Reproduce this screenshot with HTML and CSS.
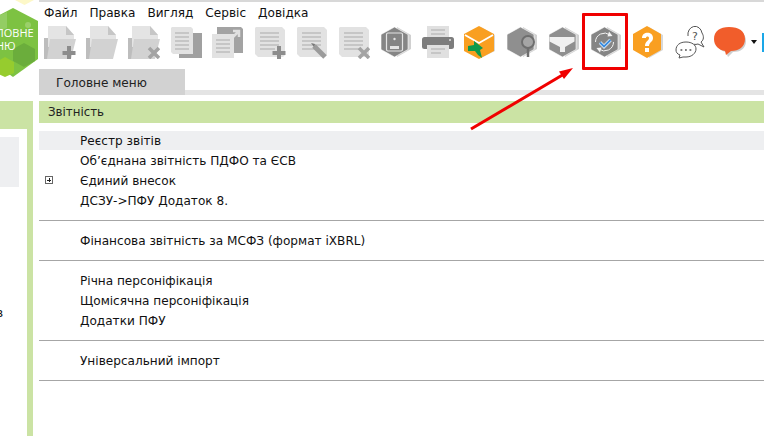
FILE: index.html
```html
<!DOCTYPE html>
<html lang="uk">
<head>
<meta charset="utf-8">
<title>Головне меню</title>
<link rel="stylesheet" href="styles.css">
</head>
<body>
<svg class="defs" width="0" height="0">
  <defs>
    <g id="folder">
      <path d="M0 13h6v21H0z" fill="#bdbdbd"/>
      <path d="M4 1h18l8 9v12H4z" fill="#e4e4e4"/>
      <path d="M22 1l8 9h-8z" fill="#c6c6c6"/>
      <path d="M3 34l3-20h26l-5 20z" fill="#d2d2d2"/>
    </g>
    <g id="sheet">
      <path d="M2 2h26l3 3v25l-2 2H4l-3-3V3z" fill="#e2e2e2"/>
      <path d="M6 8h19M6 12h19M6 16h19M6 20h19M6 24h15" stroke="#bdbdbd" stroke-width="1.600"/>
    </g>
    <g id="plus"><path d="M25 21v13M18.500 28h13" stroke="#8c8c8c" stroke-width="4"/></g>
    <g id="cross"><path d="M21 23l10 10M31 23l-10 10" stroke="#a3a3a3" stroke-width="3.600"/></g>
    <g id="hexback"><path d="M17 2l14 8v14l-14 8z" fill="#d0d0d0"/></g>
    <path id="hex" d="M14.500 2L28 9.500v15L14.500 32 1 24.500v-15z" stroke="#fff" stroke-width=".6"/>
  </defs>
</svg>

<aside class="side">
  <div class="side-head"></div>
  <div class="side-body">
    <div class="side-panel">
      <div class="side-sel"></div>
      <div class="side-text">в</div>
    </div>
    <div class="side-strip"></div>
  </div>
</aside>

<div class="logo">
  <svg class="logo-hex" width="39" height="72" viewBox="0 0 39 72">
    <path d="M13 1l25 13v38L13 70-12 52V14z" fill="#7dc242"/>
    <path d="M24 36l11 6v12l-11 6-11-6V42z" fill="#6bad3c"/>
    <path d="M5 50l9 5v11l-9 4-9-4V55z" fill="#96cc2e"/>
    <path d="M0 8l7-3v16l-7 3z" fill="#93cd63"/>
    <circle cx="28" cy="18" r="3" fill="#9bd06a"/>
  </svg>
  <span class="logo-text">ЛОВНЕ<br>НЮ</span>
</div>
<div class="logo-top"></div>

<main class="main">
  <nav class="menu">
    <span>Файл</span><span>Правка</span><span>Вигляд</span><span>Сервіс</span><span>Довідка</span>
  </nav>

  <div class="toolbar">
    <svg class="ico" viewBox="0 0 32 34"><use href="#folder"/><use href="#plus"/></svg>
    <svg class="ico" viewBox="0 0 32 34"><use href="#folder"/></svg>
    <svg class="ico" viewBox="0 0 32 34"><use href="#folder"/><use href="#cross"/></svg>
    <svg class="ico" viewBox="0 0 32 34">
      <rect x="9" y="8" width="23" height="25" fill="#a0a0a0"/>
      <path d="M2 2h19l2 2v25H3l-2-2V3z" fill="#e2e2e2"/>
      <path d="M5 8h14M5 12h14M5 16h14M5 20h14M5 24h14" stroke="#bdbdbd" stroke-width="1.600"/>
    </svg>
    <svg class="ico" viewBox="0 0 32 34">
      <path d="M5 2h24l2 2v24H5z" fill="#a3a3a3"/>
      <path d="M19 14l7-7M21 6h6v6" stroke="#e0e0e0" stroke-width="2.500" fill="none"/>
      <path d="M0 9h22v24H0z" fill="#e2e2e2"/>
      <path d="M4 15h14M4 19h14M4 23h14M4 27h14" stroke="#bdbdbd" stroke-width="1.600"/>
    </svg>
    <svg class="ico" viewBox="0 0 32 34"><use href="#sheet"/><use href="#plus"/></svg>
    <svg class="ico" viewBox="0 0 32 34">
      <use href="#sheet"/>
      <path d="M18 21l11 11" stroke="#9b9b9b" stroke-width="5"/>
      <path d="M15 18l4 1-1 3z" fill="#777"/>
    </svg>
    <svg class="ico" viewBox="0 0 32 34"><use href="#sheet"/><use href="#cross"/></svg>
    <svg class="ico" viewBox="0 0 32 34">
      <use href="#hexback"/>
      <use href="#hex" fill="#858585"/>
      <rect x="6.500" y="8" width="16" height="18" rx="1.500" fill="#858585" stroke="#e4e4e4" stroke-width="1.200"/>
      <circle cx="14.500" cy="14" r="1.200" fill="#e4e4e4"/>
      <path d="M10 24v-3h9v3z" fill="#e4e4e4"/>
    </svg>
    <svg class="ico" viewBox="0 0 32 34">
      <rect x="5" y="1" width="22" height="14" fill="#e0e0e0"/>
      <path d="M9 5h14M9 9h14" stroke="#bdbdbd" stroke-width="1.500"/>
      <rect x="0" y="12" width="32" height="12" rx="2.500" fill="#7d7d7d"/>
      <rect x="5" y="20" width="22" height="13" fill="#e0e0e0"/>
      <path d="M9 24h14M9 28h10" stroke="#bdbdbd" stroke-width="1.500"/>
      <circle cx="28" cy="15" r="1" fill="#e0e0e0"/>
    </svg>
    <svg class="ico" viewBox="0 0 32 34">
      <path d="M17 2l14 8v16l-14 7z" fill="#d8d8d8"/>
      <path d="M15 1l15 8v17l-15 8L0 26V9z" fill="#f99f21"/>
      <path d="M1 10l14 8 14-8" stroke="#fff" stroke-width="1.800" fill="none"/>
      <path d="M4 21l6-1 0-4 9 7-3 2 2 8-4-3-3-4-7 0z" fill="#0f9a4c"/>
    </svg>
    <svg class="ico" viewBox="0 0 32 34">
      <use href="#hexback"/>
      <use href="#hex" fill="#8f8f8f"/>
      <circle cx="22" cy="17" r="6" fill="#a5a5a5" stroke="#6e6e6e" stroke-width="2"/>
      <path d="M22 23v9" stroke="#6e6e6e" stroke-width="2.500"/>
    </svg>
    <svg class="ico" viewBox="0 0 32 34">
      <use href="#hexback"/>
      <use href="#hex" fill="#8f8f8f"/>
      <path d="M1.500 12h25v4.500l-9.500 5.500v5h-5v-5l-10.500-5.500z" fill="#f0f0f0"/>
    </svg>
    <svg class="ico" viewBox="0 0 32 34">
      <use href="#hexback"/>
      <use href="#hex" fill="#858585"/>
      <path d="M5.500 17a9 9 0 0 1 14.500-7M23.500 17a9 9 0 0 1-14.500 7" stroke="#f4f4f4" stroke-width="1" fill="none"/>
      <path d="M19 6.500l3.500 4.500-5 .5zM10 27.500L6.500 23l5-.5z" fill="#f4f4f4"/>
      <path d="M10 17.500l4 4 6.500-6.500" stroke="#e8f0f8" stroke-width="3.400" fill="none"/>
      <path d="M10 17.500l4 4 6.500-6.500" stroke="#3a8de0" stroke-width="1.800" fill="none"/>
    </svg>
    <svg class="ico" viewBox="0 0 32 34">
      <path d="M17 2l14 8v15l-14 8z" fill="#d8d8d8"/>
      <path d="M15 1l14 8v16l-14 8-14-8V9z" fill="#f99f21"/>
      <path d="M10 13c0-7 11-7 11 0 0 4-4 4-4 8h-4c0-5 4-5 4-8 0-2-3-2-3 0z" fill="#fff"/>
      <rect x="13" y="23" width="4" height="4" fill="#fff"/>
    </svg>
    <svg class="ico ico-chat" viewBox="0 0 32 34">
      <path d="M14 11a7 8 0 0 1 14-3c2 3 2 7-1 9l3 5-6-3c-1 .5-3 .5-4 .3" fill="#fff" stroke="#555" stroke-width="1"/>
      <path d="M2 25c0-5 4-8 10-8s10 3 10 7-4 8-10 8l-3 0-4 1 1-3c-3-1-4-3-4-5z" fill="#fff" stroke="#555" stroke-width="1"/>
      <text class="chat-q" x="21" y="15">?</text>
      <path d="M6.500 25h1.800M11 25h1.800M15.500 25h1.800" stroke="#555" stroke-width="1.600"/>
    </svg>
    <div class="balloon">
      <svg class="ico" viewBox="0 0 32 34">
        <path d="M17 5c9 0 15 3 15 11s-6 11-13 11l-5 5-2-5C6 26 3 22 3 16S8 5 17 5z" fill="#cfcfcf"/>
        <path d="M15 2c10 0 16 4 16 12s-6 12-14 12l-5 4-1-4C5 25 0 21 0 14 0 6 6 2 15 2z" fill="#f15d2b"/>
      </svg>
      <span class="caret"></span>
    </div>
    <span class="blue-edge"></span>
  </div>

  <div class="tabbar"><div class="tab">Головне меню</div></div>

  <div class="content">
    <h1 class="section">Звітність</h1>
    <ul class="group first">
      <li class="row selected">Реєстр звітів</li>
      <li class="row">Об’єднана звітність ПДФО та ЄСВ</li>
      <li class="row"><span class="expander"></span>Єдиний внесок</li>
      <li class="row">ДСЗУ-&gt;ПФУ Додаток 8.</li>
    </ul>
    <ul class="group">
      <li class="row">Фінансова звітність за МСФЗ (формат iXBRL)</li>
    </ul>
    <ul class="group">
      <li class="row">Річна персоніфікація</li>
      <li class="row">Щомісячна персоніфікація</li>
      <li class="row">Додатки ПФУ</li>
    </ul>
    <ul class="group">
      <li class="row">Універсальний імпорт</li>
    </ul>
  </div>
</main>

<div class="callout"></div>
<svg class="arrow" width="120" height="70" viewBox="0 0 120 70">
  <path d="M2 65L96 9.500" stroke="#f00000" stroke-width="3"/>
  <path d="M104 4L90 7.500l5 7.500z" fill="#f00000"/>
</svg>
</body>
</html>
```
FILE: styles.css
```css
* { box-sizing: border-box; }
html, body { margin: 0; padding: 0; }
body {
  width: 764px;
  height: 436px;
  overflow: hidden;
  background: #fff;
  display: flex;
  font-family: "DejaVu Sans", Verdana, sans-serif;
  font-size: 12.100px;
  color: #111;
  position: relative;
}
.defs { position: absolute; }

.side { width: 39px; flex: none; padding-top: 101px; display: flex; flex-direction: column; }
.side-head { height: 28px; width: 33px; background: #cbe3a4; }
.side-body { flex: 1; display: flex; }
.side-panel { width: 27px; padding-top: 8px; position: relative; }
.side-sel { width: 19px; height: 50px; background: #eeeff1; }
.side-text { margin-top: 116px; margin-left: -4px; line-height: 20px; }
.side-strip { width: 6px; background: #cbe3a4; }

.logo { position: absolute; left: 0; top: 7px; width: 39px; height: 72px; overflow: hidden; }
.logo-hex { display: block; }
.logo-text {
  position: absolute; left: -4px; top: 19px; width: 44px;
  color: #fff; font-size: 11px; line-height: 13px; text-align: left; font-family: "Open Sans", sans-serif;
}
.logo-top {
  position: absolute; left: 15px; top: 0; width: 19px; height: 5px;
  background: #fdf8c8; clip-path: polygon(0 0, 100% 0, 50% 100%);
}

.main { flex: 1; min-width: 0; display: flex; flex-direction: column; }
.menu {
  height: 23px; border-top: 2px solid #d8d8d8;
  padding: 2px 0 0 5px; display: flex; gap: 12px; line-height: 18px;
}
.toolbar { height: 44px; padding: 2px 0 0 5px; display: flex; gap: 10px; align-items: flex-start; overflow: hidden; }
.ico { width: 32px; height: 34px; flex: none; display: block; }
.ico-chat { margin-right: -2px; }
.chat-q { font-size: 11px; fill: #555; font-family: "DejaVu Sans", sans-serif; text-anchor: middle; }
.balloon { display: flex; align-items: center; gap: 5px; flex: none; }
.caret { width: 0; height: 0; border: 3px solid transparent; border-top: 4px solid #111; border-bottom: 0; }
.blue-edge { width: 2px; height: 19px; margin: 8px 0 0 -5px; background: #1aa7e8; flex: none; }

.tabbar { height: 26px; border-bottom: 5px solid #e4e4e4; margin-top: 2px; }
.tab {
  width: 146px; height: 26px; background: #d2d2d2; padding-left: 17px; line-height: 28px;
  color: #222;
}
.content { padding-top: 6px; }
.section {
  margin: 0 0 8px; height: 22px; line-height: 23px; padding-left: 9px;
  background: #cbe3a4; font-size: 11.800px; font-weight: normal; color: #222;
}
.group { list-style: none; margin: 0; padding: 10px 0 9px; border-bottom: 1px solid #a6a6a6; }
.group.first { padding-top: 0; }
.row { height: 20px; line-height: 20px; padding-left: 41px; position: relative; white-space: nowrap; }
.selected { background: linear-gradient(#eeeff1, #eeeff1) top / 100% 19px no-repeat; }
.expander {
  position: absolute; left: 6px; top: 5px; width: 8px; height: 8px;
  border: 1px solid #666;
  background:
    linear-gradient(#222, #222) center / 4px 1px no-repeat,
    linear-gradient(#222, #222) center / 1px 4px no-repeat, #fff;
}
.callout {
  position: absolute; left: 582px; top: 13px; width: 46px; height: 57px;
  border: 3px solid #f00000; border-radius: 1px;
}
.arrow { position: absolute; left: 469px; top: 64px; }
```
